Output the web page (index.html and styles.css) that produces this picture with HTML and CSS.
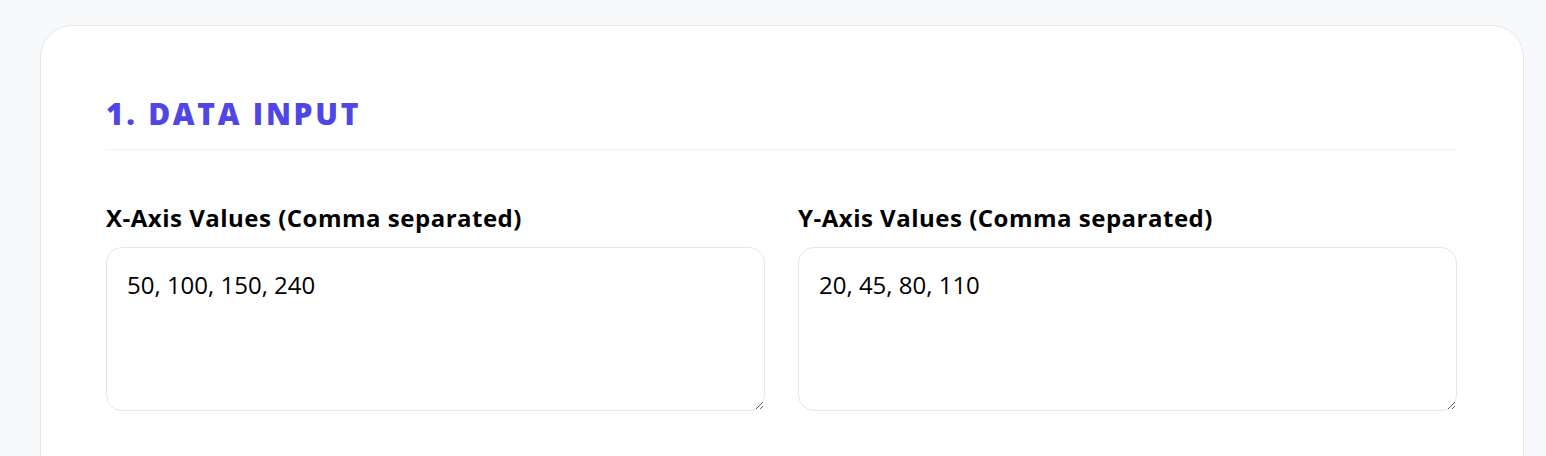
FILE: index.html
```html
<!DOCTYPE html>
<html>
<head>
<meta charset="utf-8">
<link rel="stylesheet" href="styles.css">
</head>
<body>
<section class="card">
  <h2 class="section-title">1. Data Input</h2>
  <div class="fields">
    <div class="field">
      <label class="label" for="x">X-Axis Values (Comma separated)</label>
      <textarea id="x" class="input">50, 100, 150, 240</textarea>
    </div>
    <div class="field">
      <label class="label" for="y">Y-Axis Values (Comma separated)</label>
      <textarea id="y" class="input">20, 45, 80, 110</textarea>
    </div>
  </div>
</section>
</body>
</html>
```
FILE: styles.css
```css
html, body {
  margin: 0;
  padding: 0;
  background: #f8f9fb;
  font-family: "Open Sans", "Noto Sans", sans-serif;
}
body {
  padding: 25px 22px 0 40px;
  overflow: hidden;
}
.card {
  background: #fff;
  border: 1px solid #e5e7eb;
  border-radius: 32px;
  padding: 67px 66px 80px 65px;
  min-height: 600px;
}
.section-title {
  margin: 0;
  padding-bottom: 14px;
  border-bottom: 1px solid #f1f2f4;
  font-size: 30px;
  font-weight: 800;
  letter-spacing: 0.09em;
  text-transform: uppercase;
  color: #4f46e5;
  line-height: 42px;
}
.fields {
  display: grid;
  grid-template-columns: 1fr 1fr;
  column-gap: 33px;
  margin-top: 52px;
}
.field {
  display: flex;
  flex-direction: column;
}
.label {
  font-size: 24px;
  font-weight: 700;
  letter-spacing: 0.5px;
  color: #000;
  line-height: 32px;
  margin-bottom: 13px;
}
.input {
  box-sizing: border-box;
  height: 164px;
  border: 1px solid #e5e7eb;
  border-radius: 16px;
  padding: 21px 20px;
  font-family: "Open Sans", "Noto Sans", sans-serif;
  font-size: 24px;
  line-height: 32px;
  color: #000;
  background: #fff;
  outline: none;
  resize: vertical;
}
```
